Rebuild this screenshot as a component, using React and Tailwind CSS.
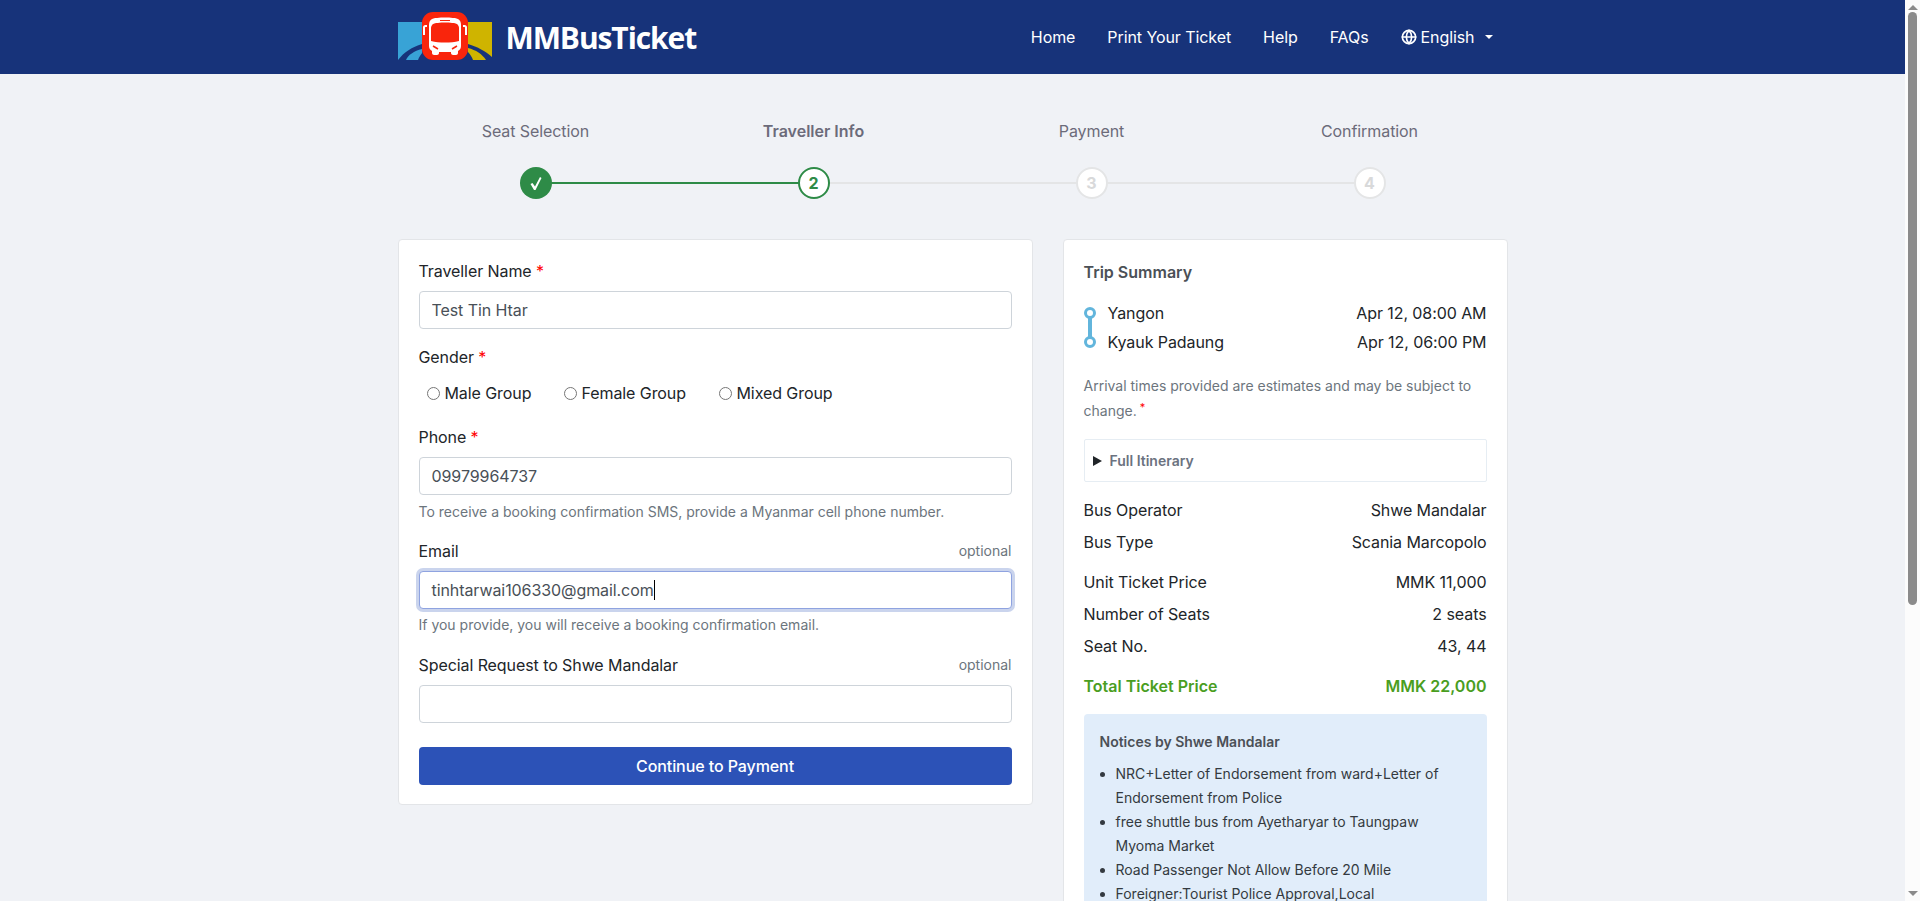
import { Globe } from 'lucide-react';

const steps = [
  { label: 'Seat Selection', state: 'done' },
  { label: 'Traveller Info', state: 'current' },
  { label: 'Payment', state: 'todo' },
  { label: 'Confirmation', state: 'todo' },
];

const notices = [
  'NRC+Letter of Endorsement from ward+Letter of Endorsement from Police',
  'free shuttle bus from Ayetharyar to Taungpaw Myoma Market',
  'Road Passenger Not Allow Before 20 Mile',
  'Foreigner:Tourist Police Approval,Local Authority\u00a0Approval',
];

const Logo = () => (
  <svg width="95" height="50" viewBox="0 0 95 50" className="shrink-0">
    <path d="M0 10h24v38H0z" fill="#38a3d6" />
    <path d="M70 10h24v38H70z" fill="#cfb400" />
    <path d="M0 48C6 40 14 35 24 32v5C16 39 10 43 8 48z" fill="#17337a" />
    <path d="M20 48c1-3 3-6 5-8v8z" fill="#17337a" />
    <path d="M94 45C87 39 80 35 70 32v4c8 2 14 6 18 12h6z" fill="#17337a" />
    <path d="M70 40c2 2 4 5 5 8h-5z" fill="#17337a" />
    <rect x="24" y="0" width="46" height="48" rx="11" fill="#f9250c" />
    <path
      d="M34 7c4-2 22-2 26 0 2 1 3 3 3 6v21c0 2-1 4-3 5v2c0 1-1 2-2 2h-3c-1 0-2-1-2-2v-1H41v1c0 1-1 2-2 2h-3c-1 0-2-1-2-2v-2c-2-1-3-3-3-5V13c0-3 1-5 3-6z"
      fill="#fff"
    />
    <path d="M35 12c4-2 20-2 24 0 1 1 2 2 2 4v13c-8 2-20 2-28 0V16c0-2 1-3 2-4z" fill="#f9250c" />
    <path d="M42 8.500h10" stroke="#f9250c" strokeWidth="1" />
    <path d="M35 34l5 3M59 34l-5 3" stroke="#f9250c" strokeWidth="1.500" />
    <path d="M29 14h-1.500c-.8 0-1.500.7-1.500 1.500V23M65 14h1.500c.8 0 1.500.7 1.500 1.500V23" stroke="#fff" strokeWidth="2" fill="none" />
  </svg>
);

const Header = () => (
  <header className="h-[74px] bg-[#17337a] shrink-0">
    <div className="w-[1110px] mx-auto h-full flex items-center justify-between">
      <div className="flex items-center">
        <Logo />
        <span className="ml-[13px] text-white text-[30px] font-bold tracking-[-1.1px] font-['Open_Sans',sans-serif]">MMBusTicket</span>
      </div>
      <nav className="flex items-center text-white text-base tracking-[-0.08px] pr-[15px]">
        <a className="mr-8">Home</a>
        <a className="mr-8">Print Your Ticket</a>
        <a className="mr-8">Help</a>
        <a className="mr-8">FAQs</a>
        <Globe size={16} strokeWidth={2.5} className="mr-1" />
        <span>English</span>
        <span className="ml-[10px] w-0 h-0 border-x-4 border-x-transparent border-t-4 border-t-white" />
      </nav>
    </div>
  </header>
);

const Stepper = () => (
  <div className="w-[1112px] mx-auto grid grid-cols-4 pt-[45px]">
    {steps.map((step, i) => (
      <div key={step.label} className="flex flex-col items-center">
        <div className={`h-6 leading-6 text-base text-[#6c6b7a] ${step.state === 'current' ? 'font-semibold' : 'tracking-[-0.08px]'}`}>{step.label}</div>
        <div className="relative w-full h-8 mt-6 flex justify-center">
          {i < steps.length - 1 && (
            <span className={`absolute left-1/2 w-full top-[15px] h-[2px] ${step.state === 'done' ? 'bg-[#2e8b47]' : 'bg-[#e4e5e6]'}`} />
          )}
          {step.state === 'done' && (
            <span className="relative w-8 h-8 rounded-full bg-[#2e8b47] flex items-center justify-center">
              <svg width="12" height="13" viewBox="0 0 12 13">
                <path d="M.5 7 2.500 6 5 9.500 10 0l1.500 1-6 12H4z" fill="#fff" />
              </svg>
            </span>
          )}
          {step.state === 'current' && (
            <span className="relative w-8 h-8 rounded-full bg-white border-2 border-[#2e8b47] text-[#2e8b47] flex items-center justify-center text-base font-bold">{i + 1}</span>
          )}
          {step.state === 'todo' && (
            <span className="relative w-8 h-8 rounded-full bg-white border-2 border-[#e4e5e6] text-[#d8d9da] flex items-center justify-center text-base font-bold">{i + 1}</span>
          )}
        </div>
      </div>
    ))}
  </div>
);

const FieldLabel = ({ children, required, optional }) => (
  <div className="flex justify-between items-center h-6 mb-2 text-base tracking-[-0.08px] text-[#212529]">
    <span>
      {children}
      {required && <span className="text-[#ff0000]"> *</span>}
    </span>
    {optional && <span className="text-sm tracking-normal text-[#6c757d]">optional</span>}
  </div>
);

const inputClass = 'block w-full h-[38px] px-3 text-base tracking-[-0.08px] text-[#495057] bg-white border border-[#ced4da] rounded-[4px] outline-none';

const TravellerForm = () => (
  <form className="w-[635px] self-start bg-white border border-[#e3e5e8] rounded-[4px] px-5 pt-[19px] pb-[19px]">
    <FieldLabel required>Traveller Name</FieldLabel>
    <input className={inputClass} readOnly value="Test Tin Htar" />

    <div className="mt-4">
      <FieldLabel required>Gender</FieldLabel>
      <div className="flex items-center h-6 mt-3 pl-2 text-base tracking-[-0.08px] text-[#212529]">
        <label className="flex items-center w-[137px]">
          <input type="radio" name="gender" className="m-0 mr-[5px]" />
          Male Group
        </label>
        <label className="flex items-center w-[155px]">
          <input type="radio" name="gender" className="m-0 mr-[5px]" />
          Female Group
        </label>
        <label className="flex items-center">
          <input type="radio" name="gender" className="m-0 mr-[5px]" />
          Mixed Group
        </label>
      </div>
    </div>

    <div className="mt-5">
      <FieldLabel required>Phone</FieldLabel>
      <input className={inputClass} readOnly value="09979964737" />
      <p className="mt-[7px] text-sm leading-5 text-[#6c757d]">To receive a booking confirmation SMS, provide a Myanmar cell phone number.</p>
    </div>

    <div className="mt-[17px]">
      <FieldLabel optional>Email</FieldLabel>
      <div className="flex items-center w-full h-[38px] px-3 text-base tracking-[-0.08px] text-[#495057] bg-white border border-[#8fa3e0] rounded-[4px] shadow-[0_0_0_3px_rgba(44,82,183,0.25)]">
        tinhtarwai106330@gmail.com
        <span className="w-px h-[20px] bg-black" />
      </div>
      <p className="mt-[6px] text-sm leading-5 text-[#6c757d]">If you provide, you will receive a booking confirmation email.</p>
    </div>

    <div className="mt-[18px]">
      <FieldLabel optional>Special Request to Shwe Mandalar</FieldLabel>
      <input className={inputClass} readOnly value="" />
    </div>

    <button type="button" className="block w-full h-[38px] mt-6 bg-[#2c52b7] text-white text-base tracking-[-0.08px] font-medium rounded-[4px]">Continue to Payment</button>
  </form>
);

const Row = ({ label, value, className = 'tracking-[-0.08px] text-[#212529]' }) => (
  <div className={`flex justify-between h-8 leading-8 text-base ${className}`}>
    <span>{label}</span>
    <span>{value}</span>
  </div>
);

const TripSummary = () => (
  <aside className="w-[445px] self-start bg-white border border-[#e3e5e8] rounded-[4px] px-5 pt-5 pb-5">
    <h2 className="h-6 leading-6 text-base font-semibold text-[#4b5056]">Trip Summary</h2>

    <div className="flex mt-[15px]">
      <svg width="12" height="41" viewBox="0 0 12 41" className="shrink-0 mt-2">
        <path d="M6 8v25" stroke="#62b5dc" strokeWidth="4" />
        <circle cx="6" cy="6" r="4.500" fill="#fff" stroke="#62b5dc" strokeWidth="3" />
        <circle cx="6" cy="35" r="4.500" fill="#fff" stroke="#62b5dc" strokeWidth="3" />
      </svg>
      <div className="flex-1 ml-3 text-base tracking-[-0.08px] leading-[29px] text-[#212529]">
        <div className="flex justify-between"><span>Yangon</span><span>Apr 12, 08:00 AM</span></div>
        <div className="flex justify-between"><span>Kyauk Padaung</span><span>Apr 12, 06:00 PM</span></div>
      </div>
    </div>

    <p className="mt-4 text-sm leading-[25px] text-[#6c757d]">
      Arrival times provided are estimates and may be subject to change.
      <sup className="text-[#ff0000] text-[11px] leading-none ml-[3px]">*</sup>
    </p>

    <div className="flex items-center h-[43px] mt-4 px-2 border border-[#e6edf3] rounded-[2px]">
      <span className="w-0 h-0 border-y-[5px] border-y-transparent border-l-[9px] border-l-[#212529]" />
      <span className="ml-2 text-sm font-semibold text-[#6b7280]">Full Itinerary</span>
    </div>

    <div className="mt-3">
      <Row label="Bus Operator" value="Shwe Mandalar" />
      <Row label="Bus Type" value="Scania Marcopolo" />
    </div>
    <div className="mt-2">
      <Row label="Unit Ticket Price" value="MMK 11,000" />
      <Row label="Number of Seats" value="2 seats" />
      <Row label="Seat No." value="43, 44" />
    </div>
    <Row label="Total Ticket Price" value="MMK 22,000" className="mt-2 font-semibold text-[#4a9e1f]" />

    <div className="mt-3 bg-[#e1edfa] rounded-[4px] px-4 pt-4 pb-4">
      <h3 className="h-6 leading-6 text-sm font-semibold text-[#4b5056]">Notices by Shwe Mandalar</h3>
      <ul className="mt-2 pl-4 list-disc text-sm leading-6 text-[#343a40]">
        {notices.map((notice) => (
          <li key={notice}>{notice}</li>
        ))}
      </ul>
    </div>
  </aside>
);

const ScrollBar = () => (
  <div className="w-[15px] h-full shrink-0 bg-[#fcfcfc] flex flex-col items-center justify-between py-[5px]">
    <span className="w-0 h-0 border-x-[5px] border-x-transparent border-b-[5px] border-b-[#8b8b8b]" />
    <span className="w-[9px] h-[593px] -mt-[285px] rounded-[5px] bg-[#8b8b8b]" />
    <span className="w-0 h-0 border-x-[5px] border-x-transparent border-t-[5px] border-t-[#8b8b8b]" />
  </div>
);

const App = () => (
  <div className="flex h-[901px] overflow-hidden bg-[#f0f2f6] font-['Inter',sans-serif]">
    <div className="flex-1 min-w-0 flex flex-col">
      <Header />
      <Stepper />
      <main className="w-[1110px] mx-auto mt-10 flex justify-between">
        <TravellerForm />
        <TripSummary />
      </main>
    </div>
    <ScrollBar />
  </div>
);

export default App;
